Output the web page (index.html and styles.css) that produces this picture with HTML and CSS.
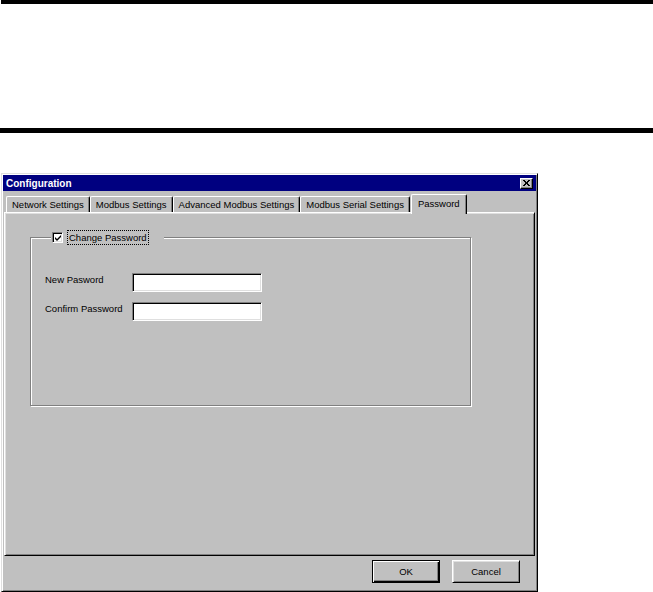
FILE: index.html
```html
<!DOCTYPE html>
<html>
<head>
<meta charset="utf-8">
<title>Configuration</title>
<link rel="stylesheet" href="styles.css">
</head>
<body>
<div class="rule rule-top"></div>
<div class="rule rule-bottom"></div>

<div class="dialog">
  <div class="titlebar">
    <span class="title">Configuration</span>
    <span class="close-btn">
      <svg width="7" height="6" viewBox="0 0 7 6"><path d="M0 0h2v1h1v1h1V1h1V0h2v1H6v1H5v2h1v1h1v1H5V5H4V4H3v1H2v1H0V5h1V4h1V2H1V1H0z" fill="#000"/></svg>
    </span>
  </div>

  <div class="tabs">
    <div class="tab">Network Settings</div>
    <div class="tab">Modbus Settings</div>
    <div class="tab">Advanced Modbus Settings</div>
    <div class="tab">Modbus Serial Settings</div>
    <div class="tab tab-active">Password</div>
  </div>

  <div class="panel">
    <div class="group">
      <div class="legend">
        <span class="checkbox">
          <svg width="7" height="7" viewBox="0 0 7 7"><path d="M6 0v2L3 5 2 6 0 4V2l2 2 3-3z" fill="#000"/></svg>
        </span>
        <span class="focus-label">Change Password</span>
      </div>
      <div class="fields">
        <label class="field-label">New Pasword</label>
        <span class="textbox"></span>
        <label class="field-label">Confirm Password</label>
        <span class="textbox"></span>
      </div>
    </div>
  </div>

  <div class="footer">
    <button class="btn btn-default">OK</button>
    <button class="btn">Cancel</button>
  </div>
</div>
</body>
</html>
```

FILE: styles.css
```css
html, body {
  margin: 0;
  padding: 0;
  background: #fff;
}

body {
  width: 653px;
  height: 592px;
  overflow: hidden;
  font-family: "Liberation Sans", Arial, sans-serif;
  font-size: 9.5px;
  color: #000;
}

.rule {
  background: #000;
}

.rule-top {
  height: 4px;
  margin-left: 1px;
}

.rule-bottom {
  height: 5px;
  margin-top: 124px;
}

.dialog {
  box-sizing: border-box;
  margin: 40px 0 0 1px;
  width: 537px;
  height: 419px;
  background: #c0c0c0;
  border: 1px solid;
  border-color: #dfdfdf #000 #000 #dfdfdf;
  box-shadow: inset 1px 1px #fff, inset -1px -1px #808080;
  padding: 1px;
  display: flex;
  flex-direction: column;
}

.titlebar {
  height: 16px;
  background: #000080;
  color: #fff;
  display: flex;
  align-items: center;
  justify-content: space-between;
  padding: 0 3px 0 3px;
}

.title {
  font-weight: bold;
  font-size: 10px;
}

.close-btn {
  box-sizing: border-box;
  width: 13px;
  height: 11px;
  background: #c0c0c0;
  border: 1px solid;
  border-color: #fff #000 #000 #fff;
  box-shadow: inset -1px -1px #808080;
  display: flex;
  align-items: center;
  justify-content: center;
  padding: 0 1px 1px 0;
}

.close-btn svg {
  display: block;
}

.tabs {
  display: flex;
  align-items: flex-end;
  height: 18px;
  margin-top: 3px;
  padding-left: 3px;
}

.tab {
  box-sizing: border-box;
  height: 16px;
  padding: 0 5px 0 5px;
  display: flex;
  align-items: center;
  white-space: nowrap;
  border-top: 1px solid #fff;
  border-left: 1px solid #fff;
  border-right: 1px solid #000;
  box-shadow: inset -1px 0 #808080;
  border-radius: 2px 2px 0 0;
}

.tab-active {
  position: relative;
  z-index: 1;
  height: 20px;
  margin-bottom: -2px;
  margin-left: 1px;
  padding: 0 6px 3px 6px;
  background: #c0c0c0;
}

.panel {
  flex: 1;
  margin: 0 1px;
  border: 1px solid;
  border-color: #fff #000 #000 #fff;
  box-shadow: inset 1px 1px #dfdfdf, inset -1px -1px #808080;
  padding: 24px 0 0 25px;
}

.group {
  box-sizing: border-box;
  width: 441px;
  height: 169px;
  border: 1px solid #808080;
  box-shadow: inset 1px 1px #fff, 1px 1px #fff;
}

.legend {
  display: flex;
  align-items: center;
  width: max-content;
  margin: -8px 0 0 20px;
  padding: 0 15px 0 1px;
  background: #c0c0c0;
  height: 15px;
}

.checkbox {
  box-sizing: border-box;
  width: 11px;
  height: 11px;
  background: #fff;
  border: 1px solid;
  border-color: #808080 #fff #fff #808080;
  box-shadow: inset 1px 1px #000, inset -1px -1px #dfdfdf;
  display: flex;
  align-items: center;
  justify-content: center;
  padding: 1px 0 0 1px;
}

.checkbox svg {
  display: block;
}

.focus-label {
  margin-left: 4px;
  padding: 1px 1px 1px 1px;
  border: 1px dotted #000;
  line-height: 11px;
}

.fields {
  display: grid;
  grid-template-columns: 87px 130px;
  grid-auto-rows: 19px;
  row-gap: 10px;
  align-items: start;
  margin: 28px 0 0 14px;
}

.field-label {
  line-height: 12px;
  margin-top: 1px;
}

.textbox {
  box-sizing: border-box;
  display: block;
  height: 19px;
  background: #fff;
  border: 1px solid;
  border-color: #808080 #fff #fff #808080;
  box-shadow: inset 1px 1px #000, inset -1px -1px #dfdfdf;
}

.footer {
  height: 34px;
  display: flex;
  justify-content: flex-end;
  align-items: flex-start;
  gap: 12px;
  padding: 4px 16px 0 0;
  box-sizing: border-box;
}

.btn {
  box-sizing: border-box;
  width: 68px;
  height: 23px;
  margin: 0;
  padding: 0;
  font-family: "Liberation Sans", Arial, sans-serif;
  font-size: 9.5px;
  color: #000;
  background: #c0c0c0;
  border: 1px solid;
  border-color: #fff #000 #000 #fff;
  box-shadow: inset 1px 1px #dfdfdf, inset -1px -1px #808080;
}

.btn-default {
  border-color: #000;
  box-shadow: inset 1px 1px #fff, inset -1px -1px #000, inset -2px -2px #808080;
}
```
